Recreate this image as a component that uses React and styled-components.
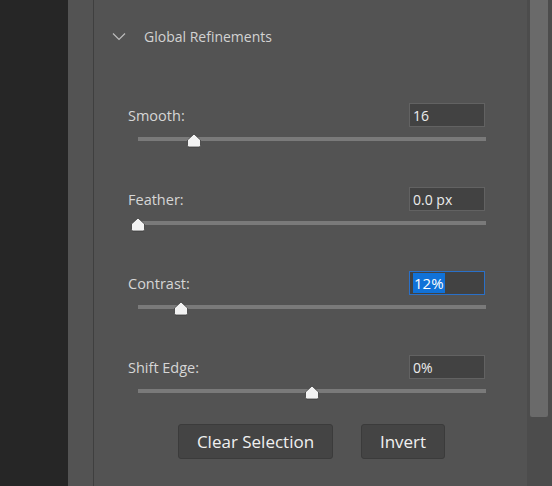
import React from "react";
import styled, { createGlobalStyle } from "styled-components";

const GlobalStyle = createGlobalStyle`
  html, body {
    margin: 0;
    padding: 0;
    background: #535353;
  }
  body {
    font-family: "Open Sans", "Noto Sans", sans-serif;
  }
`;

const Screen = styled.div`
  display: flex;
  width: 552px;
  height: 486px;
  overflow: hidden;
`;

const DarkSide = styled.div`
  width: 68px;
  background: #262626;
`;

const Gutter = styled.div`
  width: 25px;
  background: #535353;
  border-right: 1px solid #3f3f3f;
  box-shadow: 1px 0 0 #5d5d5d;
`;

const Panel = styled.div`
  flex: 1;
  display: flex;
  flex-direction: column;
  padding: 24px 0 0 1px;
  background: #535353;
`;

const Header = styled.div`
  display: flex;
  align-items: center;
  height: 24px;
  padding-left: 17px;
  gap: 18px;
  color: #d2d2d2;
  font-size: 14px;
`;

const Controls = styled.div`
  display: flex;
  flex-direction: column;
  gap: 46px;
  margin-top: 55px;
  padding: 0 41px 0 33px;
`;

const Group = styled.div`
  display: flex;
  flex-direction: column;
  gap: 10px;
`;

const Row = styled.div`
  display: flex;
  align-items: center;
  justify-content: space-between;
  height: 24px;
`;

const Label = styled.span`
  color: #d6d6d6;
  font-size: 14.5px;
`;

const Field = styled.div`
  box-sizing: border-box;
  width: 76px;
  height: 24px;
  margin-right: 1px;
  padding: 0 3px;
  display: flex;
  align-items: center;
  background: #424242;
  border: 1px solid ${(p) => (p.$focused ? "#2a70c8" : "#626262")};
  color: #ececec;
  font-size: ${(p) => (p.$focused ? 15 : 14)}px;
`;

const Selected = styled.span`
  background: #1172d8;
  color: #ffffff;
  line-height: 20px;
  padding: 0 1px;
`;

const Track = styled.div`
  position: relative;
  height: 4px;
  margin-left: 10px;
  background: #7a7a7a;
`;

const Thumb = styled.svg`
  position: absolute;
  top: -4px;
  width: 16px;
  height: 15px;
  margin-left: -8px;
`;

const Buttons = styled.div`
  display: flex;
  gap: 28px;
  margin-top: 31px;
  padding-left: 83px;
`;

const Button = styled.button`
  box-sizing: border-box;
  width: ${(p) => p.$w}px;
  height: 35px;
  padding: 0;
  background: #444444;
  border: 1px solid #3b3b3b;
  border-radius: 3px;
  color: #f0f0f0;
  font-family: "Open Sans", "Noto Sans", sans-serif;
  font-size: 17px;
`;

const ScrollTrack = styled.div`
  width: 25px;
  background: #4c4c4c;
  padding: 0 4px 0 3px;
  box-sizing: border-box;
`;

const ScrollThumb = styled.div`
  height: 417px;
  background: #6a6a6a;
  border-radius: 0 0 2px 2px;
`;

const Chevron = () => (
  <svg width="14" height="9" viewBox="0 0 14 9">
    <path d="M1 1.5 L7 7.5 L13 1.5" fill="none" stroke="#bdbdbd" strokeWidth="1.2" />
  </svg>
);

const sliders = [
  { label: "Smooth:", value: "16", pos: 16 },
  { label: "Feather:", value: "0.0 px", pos: 0 },
  { label: "Contrast:", value: "12%", pos: 12.4, focused: true },
  { label: "Shift Edge:", value: "0%", pos: 50 },
];

const Slider = ({ label, value, pos, focused }) => (
  <Group>
    <Row>
      <Label>{label}</Label>
      <Field $focused={focused}>
        {focused ? <Selected>{value}</Selected> : value}
      </Field>
    </Row>
    <Track>
      <Thumb viewBox="0 0 16 15" style={{ left: `${pos}%` }}>
        <path
          d="M8 1 L14.5 7 L14.5 12.5 Q14.5 14 13 14 L3 14 Q1.5 14 1.5 12.5 L1.5 7 Z"
          fill="#f2f2f2"
          stroke="#3a3a3a"
          strokeWidth="0.8"
          strokeLinejoin="round"
        />
      </Thumb>
    </Track>
  </Group>
);

export default function App() {
  return (
    <>
      <GlobalStyle />
      <Screen>
        <DarkSide />
        <Gutter />
        <Panel>
          <Header>
            <Chevron />
            <span>Global Refinements</span>
          </Header>
          <Controls>
            {sliders.map((s) => (
              <Slider key={s.label} {...s} />
            ))}
          </Controls>
          <Buttons>
            <Button $w={155}>Clear Selection</Button>
            <Button $w={84}>Invert</Button>
          </Buttons>
        </Panel>
        <ScrollTrack>
          <ScrollThumb />
        </ScrollTrack>
      </Screen>
    </>
  );
}
